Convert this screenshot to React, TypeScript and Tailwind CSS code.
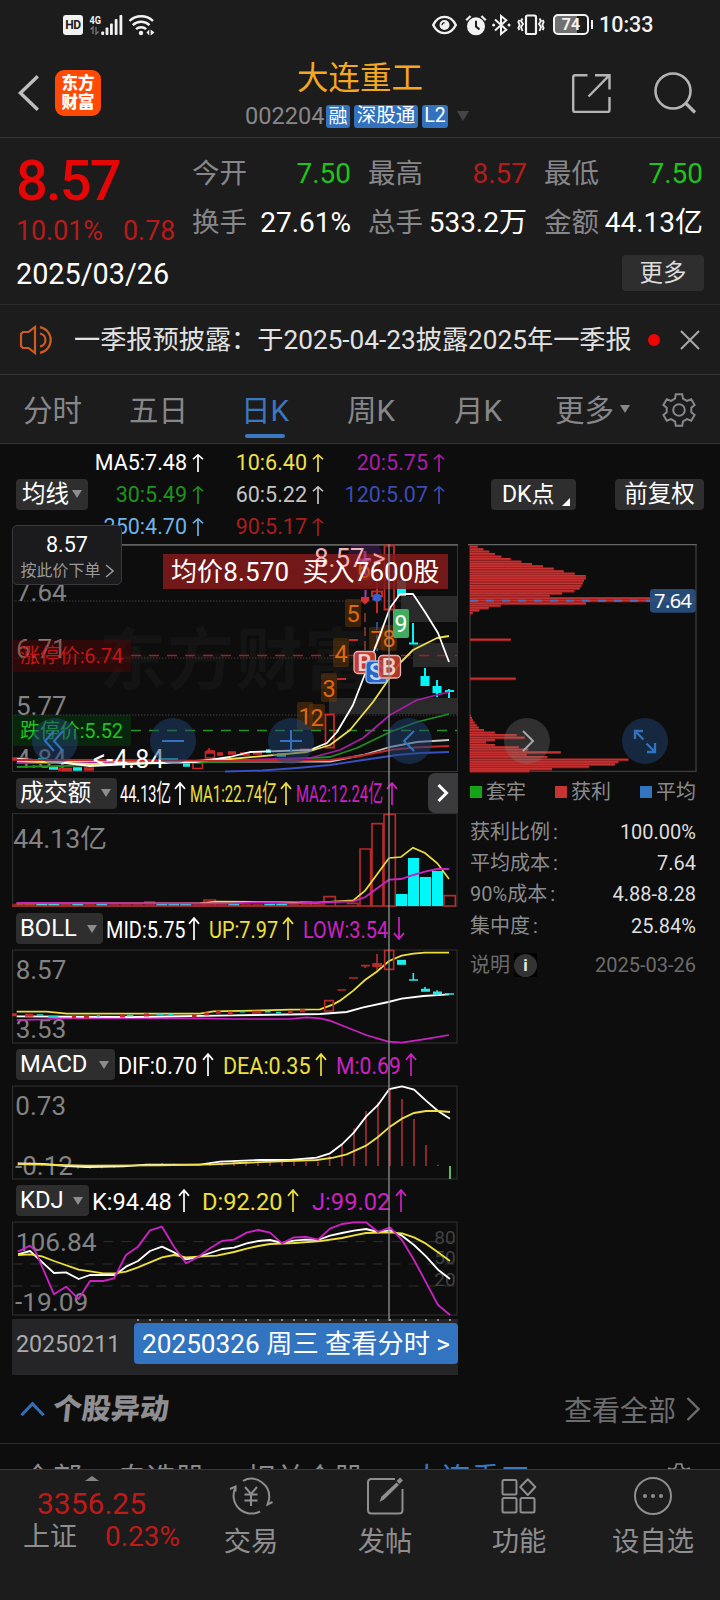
import React from "react";

const FONT = "font-['Roboto','Noto_Sans_CJK_SC',sans-serif]";

function Arrow({ down = false, className = "" }: { down?: boolean; className?: string }) {
  return (
    <svg viewBox="0 0 12 22" preserveAspectRatio="none" className={`shrink-0 ${className}`} fill="none" stroke="currentColor" strokeWidth="1.7">
      {down ? <path d="M6 0V21M1 15.5L6 21L11 15.5" /> : <path d="M6 22V1M1 6.5L6 1L11 6.5" />}
    </svg>
  );
}

function Tri({ className = "" }: { className?: string }) {
  return (
    <svg viewBox="0 0 10 8" className={`shrink-0 ${className}`} fill="currentColor">
      <path d="M0 0H10L5 8Z" />
    </svg>
  );
}

function Gear({ className = "" }: { className?: string }) {
  return (
    <svg viewBox="0 0 34 34" className={`shrink-0 ${className}`} fill="none" stroke="currentColor" strokeWidth="2">
      <path d="M13.8 1.2H20.2L21 5.6L25 7.9L29.2 6.3L32.6 12L29.3 14.7V19.3L32.6 22L29.2 27.7L25 26.1L21 28.4L20.2 32.8H13.8L13 28.4L9 26.1L4.8 27.7L1.4 22L4.7 19.3V14.7L1.4 12L4.8 6.3L9 7.9L13 5.6Z" />
      <circle cx="17" cy="17" r="5.8" />
    </svg>
  );
}

function StatusBar() {
  return (
    <div className="flex h-[48px] items-center pl-[63px] pt-px text-[#f2f2f2]">
      <div className="flex h-[20px] w-[20px] items-center justify-center rounded-[3px] bg-[#f2f2f2] text-[12px] font-bold leading-none text-[#1c1c1c]">
        <span className="tracking-[-0.4px]">HD</span>
      </div>
      <svg viewBox="0 0 66 22" className="ml-[6px] h-[22px] w-[66px]" fill="currentColor">
        <text x="0.5" y="9.5" fontSize="11.5" fontWeight="700" textLength="11.5" lengthAdjust="spacingAndGlyphs">4G</text>
        <g stroke="#777" strokeWidth="1.3" fill="none">
          <path d="M4 20V13L1.5 15.5M7 13V20L9.5 17.5" />
        </g>
        <rect x="12.3" y="17.5" width="2.8" height="3.5" rx="0.8" />
        <rect x="16.6" y="13.5" width="2.8" height="7.5" rx="0.8" />
        <rect x="21" y="9.5" width="2.8" height="11.5" rx="0.8" />
        <rect x="25.7" y="5" width="2.8" height="16" rx="0.8" />
        <rect x="30.5" y="1" width="2.8" height="20" rx="0.8" />
        <g fill="none" stroke="currentColor" strokeWidth="2.4">
          <path d="M40.5 7A17 17 0 0 1 64 7" />
          <path d="M43.8 11.2A12 12 0 0 1 60.5 11.2" />
          <path d="M47 15.2A7.5 7.5 0 0 1 57.2 15.2" />
        </g>
        <circle cx="52" cy="19" r="2.2" />
        <path d="M57.5 18.5L60.3 15.5V21.5ZM61.7 15.5L65.5 18.5L61.7 21.5Z" />
      </svg>
      <div className="ml-[277px] flex items-center">
        <svg viewBox="0 0 25 20" className="h-[20px] w-[25px]" fill="none" stroke="currentColor" strokeWidth="2.4">
          <path d="M1.2 10C6.5 -0.8 18.5 -0.8 23.8 10C18.5 20.8 6.5 20.8 1.2 10Z" />
          <circle cx="12.5" cy="10" r="5" fill="currentColor" stroke="none" />
          <path d="M10 10.3A2.6 2.6 0 0 1 12.6 7.6" stroke="#1c1c1c" strokeWidth="1.2" />
        </svg>
        <svg viewBox="0 0 22 22" className="ml-[8px] h-[22px] w-[22px]">
          <circle cx="11" cy="12.3" r="9" fill="currentColor" />
          <path d="M1.2 6.2L5.6 2M20.8 6.2L16.4 2" stroke="currentColor" strokeWidth="2.2" />
          <path d="M11 6.8V12.5L14.5 15.6" stroke="#1c1c1c" strokeWidth="2" fill="none" />
        </svg>
        <svg viewBox="0 0 19 22" className="ml-[5px] h-[22px] w-[19px]" fill="none" stroke="currentColor" strokeWidth="2">
          <path d="M3 5.6L14.3 15.8L9 20V2L14.3 6.2L3 16.4" />
          <circle cx="1.6" cy="11" r="1.5" fill="currentColor" stroke="none" />
          <circle cx="17" cy="11" r="1.5" fill="currentColor" stroke="none" />
        </svg>
        <svg viewBox="0 0 28 22" className="ml-[6px] h-[22px] w-[28px]" fill="none" stroke="currentColor" strokeWidth="2.2">
          <rect x="9" y="1.5" width="10" height="18.5" rx="1.5" />
          <path d="M5.5 4.5L4 7L6 10L4 13L5.5 17M2.4 6L1.4 8L2.6 11L1.4 14L2.4 16" strokeWidth="1.9" />
          <path d="M22.5 4.5L24 7L22 10L24 13L22.5 17M25.6 6L26.6 8L25.4 11L26.6 14L25.6 16" strokeWidth="1.9" />
        </svg>
        <div className="ml-[8px] flex h-[21px] w-[36px] items-center justify-center rounded-[5px] border-2 border-[#f2f2f2] bg-gradient-to-r from-[#707070] from-70% to-[#1c1c1c] to-70% text-[16px] font-bold leading-none">
          74
        </div>
        <div className="ml-[2px] h-[9px] w-[2px] bg-[#f2f2f2]" />
        <div className="ml-[6px] text-[21.5px] font-medium leading-none">10:33</div>
      </div>
    </div>
  );
}

function Header() {
  return (
    <div className="flex h-[90px] border-b border-[#333335]">
      <svg viewBox="0 0 22 36" className="ml-[17px] mt-[27px] h-[36px] w-[22px]" fill="none" stroke="#bdbdbd" strokeWidth="3.4">
        <path d="M20.8 1.2L3.4 18L20.8 34.8" />
      </svg>
      <div className="ml-[16px] mt-[22px] flex h-[46px] w-[46px] flex-col items-center justify-center rounded-[9px] bg-[#ff4a06] text-[16.5px] font-black leading-[19px] text-white">
        <span>东方</span>
        <span>财富</span>
      </div>
      <div className="ml-[125px] flex w-[270px] flex-col items-center">
        <div className="ml-[-2px] mt-[13px] h-[36px] whitespace-nowrap text-[31.5px] leading-[36px] text-[#f5a623]">大连重工</div>
        <div className="ml-[-8px] mt-[7px] flex items-center text-[#87878b]">
          <span className="w-[82px] pl-px text-[23.6px] leading-[24px]">002204</span>
          <span className="flex h-[23px] w-[24px] items-center justify-center rounded-[3px] bg-[#3272be] text-[19px] leading-none text-white">融</span>
          <span className="ml-[4px] flex h-[23px] w-[64px] items-center justify-center rounded-[3px] bg-[#3272be] text-[19.5px] leading-none text-white">深股通</span>
          <span className="ml-[4px] flex h-[23px] w-[26px] items-center justify-center rounded-[3px] bg-[#3272be] text-[19.5px] leading-none text-white">L2</span>
          <Tri className="ml-[8px] h-[10px] w-[14px] text-[#454547]" />
        </div>
      </div>
      <svg viewBox="0 0 40 40" className="ml-[75px] mt-[25px] h-[40px] w-[40px]" fill="none" stroke="#b4b4b4" strokeWidth="2.4">
        <path d="M16.5 2.2H4.2Q2.2 2.2 2.2 4.2V37Q2.2 39 4.2 39H36.5Q38.5 39 38.5 37V24" />
        <path d="M24 2.2H38.5V16.5M38 2.7L17.5 23.5" />
      </svg>
      <svg viewBox="0 0 44 44" className="ml-[42px] mt-[23px] h-[44px] w-[44px]" fill="none" stroke="#b4b4b4" strokeWidth="2.6">
        <circle cx="20" cy="20" r="17.5" />
        <path d="M32.5 32L42 41.5" strokeWidth="3.2" />
      </svg>
    </div>
  );
}

function Cell({ label, value, color, gap }: { label: string; value: string; color: string; gap: string }) {
  return (
    <div className={`flex h-[49px] items-center justify-between ${gap}`}>
      <span className="text-[27.5px] text-[#87878b]">{label}</span>
      <span className={color}>{value}</span>
    </div>
  );
}

function Quote() {
  return (
    <div className="h-[167px] border-b border-[#2b2b2d]">
      <div className="flex h-[110px]">
        <div className="w-[192px] pl-[16px]">
          <div className="mt-[15px] h-[56px] text-[56px] font-medium leading-[56px] tracking-[-1.8px] text-[#e60606]">8.57</div>
          <div className="mt-[9px] flex h-[27px] text-[26.8px] leading-[27px] text-[#b91b1b]">
            <span className="w-[107px]">10.01%</span>
            <span>0.78</span>
          </div>
        </div>
        <div className="mt-[11px] grid w-[511px] grid-cols-[159px_176px_176px] text-[28px] leading-[32px] text-white">
          <Cell label="今开" value="7.50" color="text-[#1fc31f]" gap="" />
          <Cell label="最高" value="8.57" color="text-[#b91b1b]" gap="pl-[17px]" />
          <Cell label="最低" value="7.50" color="text-[#1fc31f]" gap="pl-[17px]" />
          <Cell label="换手" value="27.61%" color="" gap="" />
          <Cell label="总手" value="533.2万" color="" gap="pl-[17px]" />
          <Cell label="金额" value="44.13亿" color="" gap="pl-[17px]" />
        </div>
      </div>
      <div className="flex items-center justify-between pl-[16px] pr-[16px] pt-[5px]">
        <span className="pt-[3px] text-[28.8px] leading-[36px] text-white">2025/03/26</span>
        <span className="flex h-[36px] w-[82px] items-center justify-center rounded-[4px] bg-[#2e2e2f] text-[23.5px] leading-none text-[#dcdcdc]">
          <span className="pt-[2px]">更多</span>
        </span>
      </div>
    </div>
  );
}

function Notice() {
  return (
    <div className="flex h-[70px] items-center border-b border-[#333335] pl-[19px]">
      <svg viewBox="0 0 36 30" className="h-[30px] w-[36px]" fill="none" stroke="#cf5c22" strokeWidth="2.2">
        <path d="M16 2V28L9.5 23H4L2 21V9L4 7H9.5Z" />
        <path d="M21 2.2A13 13 0 0 1 21 27.8M21 8.5A6.6 6.6 0 0 1 21 21.5" />
      </svg>
      <span className="ml-[19px] w-[560px] whitespace-nowrap text-[26.2px] leading-[36px] text-[#e2e2e2]">一季报预披露：于2025-04-23披露2025年一季报</span>
      <span className="ml-[14px] h-[12px] w-[12px] rounded-full bg-[#f00505]" />
      <svg viewBox="0 0 20 20" className="ml-[20px] h-[20px] w-[20px]" stroke="#a8a8a8" strokeWidth="2">
        <path d="M1 1L19 19M19 1L1 19" />
      </svg>
    </div>
  );
}

function PeriodTabs() {
  return (
    <div className="flex h-[69px] border-b border-[#333335] pt-[18px] text-[29.5px] leading-[36px] text-[#87878b]">
      <span className="ml-[23px] w-[106px]">分时</span>
      <span className="w-[112px]">五日</span>
      <div className="w-[106px] text-[#3b78bf]">
        <div className="h-[36px]">日K</div>
        <div className="ml-[4px] mt-[5px] h-[4px] w-[40px] rounded-full bg-[#3b78bf]" />
      </div>
      <span className="w-[107px]">周K</span>
      <span className="w-[101px]">月K</span>
      <span className="w-[65px]">更多</span>
      <Tri className="mt-[12px] h-[8px] w-[10px]" />
      <Gear className="ml-[32px] h-[34px] w-[34px]" />
    </div>
  );
}

function Ma({ text, color }: { text: string; color: string }) {
  return (
    <div className={`flex h-[32px] items-center justify-end text-[21.5px] leading-none ${color}`}>
      {text}
      <Arrow className="ml-[5px] h-[18px] w-[12px]" />
    </div>
  );
}

function ChartHeader() {
  return (
    <div className="relative flex h-[100px] items-center pl-[16px] text-white">
      <div className="flex h-[31px] w-[72px] items-center rounded-[4px] bg-[#2e2e2f] pl-[6px] text-[23.5px] leading-none">
        <span className="pt-px">均线</span>
        <Tri className="ml-[3px] h-[8px] w-[10px] text-[#8d8d8d]" />
      </div>
      <div className="mt-px grid w-[357px] grid-cols-[116px_120px_121px]">
        <Ma text="MA5:7.48" color="text-white" />
        <Ma text="10:6.40" color="text-[#ede04a]" />
        <Ma text="20:5.75" color="text-[#a81ea8]" />
        <Ma text="30:5.49" color="text-[#1f911f]" />
        <Ma text="60:5.22" color="text-[#c4c4c4]" />
        <Ma text="120:5.07" color="text-[#3a4cb4]" />
        <Ma text="250:4.70" color="text-[#6fb2e6]" />
        <Ma text="90:5.17" color="text-[#a81e1e]" />
      </div>
      <div className="ml-[46px] flex h-[31px] w-[85px] items-center rounded-[4px] bg-[#2e2e2f] pl-[11px] text-[23px] leading-none">
        <span className="pt-px">DK点</span>
        <svg viewBox="0 0 8 8" className="ml-[7px] mt-[15px] h-[8px] w-[8px]" fill="#fff"><path d="M8 0V8H0Z" /></svg>
      </div>
      <div className="ml-[39px] flex h-[31px] w-[89px] items-center justify-center rounded-[4px] bg-[#2e2e2f] text-[23.5px] leading-none">
        <span className="pt-px">前复权</span>
      </div>
      <div className="absolute left-[12px] top-[81px] z-20 flex h-[60px] w-[110px] flex-col items-center rounded-[5px] border border-[#3a3a3c] bg-[#1b1b1d]">
        <div className="mt-[6px] text-[21.5px] leading-[26px]">8.57</div>
        <div className="mt-[2px] flex items-center text-[16px] leading-[22px] text-[#9a9a9a]">
          按此价下单
          <svg viewBox="0 0 9 14" className="ml-[4px] h-[14px] w-[9px]" fill="none" stroke="currentColor" strokeWidth="1.5"><path d="M1 1L8 7L1 13" /></svg>
        </div>
      </div>
    </div>
  );
}

const tags: [number, number, string, number][] = [
  [345, 599, "5", 28], [333, 638, "4", 29], [321, 673, "3", 29], [297, 702, "1", 28], [309, 704, "2", 26], [357, 557, "6", 28], [369, 627, "7", 23], [381, 625, "8", 26],
];

function KLine() {
  return (
    <svg viewBox="12 544 446 229" className="block h-[229px] w-[446px]" fill="none">
      <g fill="#141414" fontSize="67" fontWeight="700">
        <text x="99" y="684" textLength="272">东方财富</text>
      </g>
      <g stroke="#2c2c2c" strokeWidth="1.5" strokeDasharray="1.5 1.5">
        <path d="M12 601H457M12 658H457M12 715H457" />
      </g>
      <path d="M12.5 544V771.5H457.5V544" stroke="#343434" />
      <path d="M12 544.8H458" stroke="#616161" strokeWidth="2" />
      <g fill="#2a2a2b">
        <rect x="401" y="596" width="56" height="26" />
        <rect x="413" y="643" width="44" height="24" />
        <rect x="329" y="698" width="128" height="16" />
      </g>
      <path d="M131 655.5H457" stroke="#9e2020" strokeDasharray="10 8" strokeWidth="1.3" />
      <path d="M131 730.5H457" stroke="#249224" strokeDasharray="10 8" strokeWidth="1.3" />
      <g fill="#828282" fontSize="26">
        <text x="16" y="601">7.64</text>
        <text x="16" y="658">6.71</text>
        <text x="16" y="715">5.77</text>
        <text x="16" y="768">4.84</text>
      </g>
      <rect x="12" y="640" width="119" height="32" rx="2" fill="#7a0000" fillOpacity="0.3" />
      <rect x="12" y="715" width="119" height="31" rx="2" fill="#005a0c" fillOpacity="0.33" />
      <text x="20" y="663" fontSize="20" fill="#c41616" textLength="103">涨停价:6.74</text>
      <text x="20" y="737.5" fontSize="20" fill="#23c023" textLength="103">跌停价:5.52</text>

      <g stroke="#c62828" strokeWidth="3.5">
        <path d="M12 759H27M60 767.5V771M62 769.5H72M84 769H94M217 754H223M228 753H236M240 754H250M253 753H262M300 750H310M206 752H215" />
      </g>
      <g stroke="#1de9e9" strokeWidth="3.5">
        <path d="M38 760H46M49 768H58M73 769H82M160 760H178M183 765H190M266 751H271M277 755H286" />
      </g>
      <path d="M193 763H202.5V768.5H193ZM205.5 752H214.5V758H205.5ZM209 748V752" stroke="#c62828" strokeWidth="1.6" />
      <path d="M325.5 714.5H334V747.5H325.5ZM384.5 545.5H394V609.5H384.5Z" stroke="#c62828" strokeWidth="1.8" />
      <g stroke="#c62828" strokeWidth="2">
        <path d="M349 640H358M337 679H346M377 575V613M372 591.5H382V596H372Z" />
        <path d="M365 613V651" stroke="#8f3a30" strokeDasharray="9 5" strokeWidth="1.6" />
        <path d="M377 622V651" stroke="#2d5fae" strokeDasharray="8 5" strokeWidth="1.6" />
        <path d="M365.5 590V600" stroke="#a040b0" />
      </g>
      <path d="M361 597L369 597V601L365 604.5L361 601Z" fill="#d83030" />
      <path d="M377 593L381.5 595.5V600L377 602L372.5 600V595.5Z" fill="#3a62c8" />
      <g fill="#00f5f5" stroke="#00f5f5">
        <rect x="397.5" y="580.5" width="8" height="15" />
        <path d="M413 623V643M409 643.5H418M425 668V677M437 680V697M449 689V698M445 691H454" strokeWidth="2" />
        <rect x="421" y="676.5" width="8" height="9" />
        <rect x="433" y="686.5" width="8" height="6" />
      </g>
      {tags.map(([x, y, t, h]) => (
        <g key={t}>
          <rect x={x} y={y} width="16" height={h} rx="2" fill="#713b08" fillOpacity="0.45" />
          <text x={x + 8} y={y + h / 2 + 9} fontSize="23.5" textAnchor="middle" fill="#e0690f">{t}</text>
        </g>
      ))}
      <g strokeWidth="1.8" strokeLinejoin="round">
        <polyline stroke="#3b50c4" points="225,771.5 262,770.5 297,768 330,765 363,760 397,755 420,753 449,752" />
        <polyline stroke="#c8c8c8" points="17,760 120,762 230,761.5 330,761.5 363,755 390,747 417,742 449,740" />
        <polyline stroke="#1f8f1f" points="17,767 60,766 120,764 250,761 330,757 357,748 390,732 417,722 449,714" />
        <polyline stroke="#a51fa5" points="17,763 90,763 160,762 240,760 310,758 340,750 363,738 390,715 417,700 449,692" />
        <polyline stroke="#ede04a" points="17,761 90,764 160,763 230,759 307,752 330,745 350,730 373,702 400,663 413,650 437,638 449,636" />
        <polyline stroke="#ffffff" points="17,759 50,761 90,766 150,763 195,762 230,757 250,752 310,750 327,743 337,732 353,705 365,674 377,643 390,608 400,594 413,594 425,612 438,633 449,662" />
        <polyline stroke="#c62828" points="17,760 120,760 230,761 290,761 330,760 360,756 390,750 415,747.5 449,746" />
      </g>
      <rect x="393" y="609" width="16" height="29" rx="2" fill="#3fac60" />
      <text x="401" y="632" fontSize="23" textAnchor="middle" fill="#fff">9</text>
      <circle cx="365" cy="556" r="17" fill="#6a2a90" fillOpacity="0.3" />
      <rect x="163" y="554" width="285" height="35" fill="#821a1a" fillOpacity="0.88" />
      <g fontSize="25">
        <text x="314" y="567" fontSize="26" fill="#f3b3b3">8.57</text>
        <text x="364" y="567" fontSize="26" fill="#d86aa0">-</text>
        <text x="372" y="567" fontSize="26" fill="#f0a0a8">&gt;</text>
        <text x="357" y="578" fill="#e0690f" fillOpacity="0.7">6</text>
        <text x="93" y="767.5" fill="#fff" textLength="71">&lt;-4.84</text>
      </g>
      <path d="M358 560H371M365 551V575" stroke="#c050b8" strokeWidth="3" strokeOpacity="0.6" />
      <g fontSize="26" fill="#fff">
        <text x="171" y="581" textLength="118">均价8.570</text>
        <text x="302.5" y="581" textLength="137">买入7600股</text>
      </g>
      <g fontSize="23" fontWeight="500" textAnchor="middle" strokeWidth="1.3">
        <rect x="354" y="651.5" width="21.5" height="22" rx="4" fill="#c23c30" stroke="#e9b3ad" />
        <text x="364.5" y="671" fill="#fff" fillOpacity="0.75">B</text>
        <rect x="366" y="661" width="21" height="22" rx="4" fill="#2766c6" stroke="#9fc0ee" />
        <text x="376" y="680" fill="#fff" fillOpacity="0.75">S</text>
        <rect x="378.5" y="655.5" width="22" height="22.5" rx="4" fill="#c23c30" fillOpacity="0.88" stroke="#e9b3ad" />
        <text x="389" y="675" fill="#fff" fillOpacity="0.75">B</text>
      </g>
    </svg>
  );
}

function RoundButton({ children, className }: { children: React.ReactNode; className: string }) {
  return (
    <div className={`absolute top-[174px] flex h-[46px] w-[46px] items-center justify-center rounded-full ${className}`}>
      <svg viewBox="0 0 30 30" className="h-[30px] w-[30px]" fill="none" stroke="currentColor" strokeWidth="2">{children}</svg>
    </div>
  );
}

type Reading = { text: string; box: string; scale: string; color: string; down?: boolean; arrow: string };

function IndicatorHeader({ name, button, row, readings, children }: { name: string; button: string; row: string; readings: Reading[]; children?: React.ReactNode }) {
  return (
    <div className={`flex items-center pl-[4px] ${row}`}>
      <div className={`flex h-[31px] shrink-0 items-center justify-between rounded-[4px] bg-[#2e2e2f] pl-[4px] pr-[6px] text-[23.8px] leading-none text-white ${button}`}>
        <span className="pt-px">{name}</span>
        <Tri className="h-[8px] w-[10px] text-[#8d8d8d]" />
      </div>
      {readings.map((r) => (
        <div key={r.text} className={`flex items-center ${r.color}`}>
          <div className={`h-[24px] whitespace-nowrap text-[24.6px] leading-[26px] ${r.box}`}>
            <span className={`inline-block origin-left ${r.scale}`}>{r.text}</span>
          </div>
          <Arrow down={r.down} className={`h-[23px] w-[12px] ${r.arrow}`} />
        </div>
      ))}
      {children}
    </div>
  );
}

const Y = "text-[#ede03a]";
const M = "text-[#cc22c4]";

const volumeReadings: Reading[] = [
  { text: "44.13亿", box: "ml-[3px] w-[51px]", scale: "scale-x-[0.59]", color: "text-white", arrow: "ml-[3px]" },
  { text: "MA1:22.74亿", box: "ml-[4px] w-[87px]", scale: "scale-x-[0.605]", color: Y, arrow: "ml-[3px]" },
  { text: "MA2:12.24亿", box: "ml-[4px] w-[87px]", scale: "scale-x-[0.605]", color: M, arrow: "ml-[3px]" },
];
const bollReadings: Reading[] = [
  { text: "MID:5.75", box: "ml-[3px] w-[79px]", scale: "scale-x-[0.81]", color: "text-white", arrow: "ml-[3px]" },
  { text: "UP:7.97", box: "ml-[9px] w-[69px]", scale: "scale-x-[0.81]", color: Y, arrow: "ml-[4px]" },
  { text: "LOW:3.54", box: "ml-[9px] w-[86px]", scale: "scale-x-[0.81]", color: M, arrow: "ml-[4px]", down: true },
];
const macdReadings: Reading[] = [
  { text: "DIF:0.70", box: "ml-[3px] w-[80px]", scale: "scale-x-[0.875]", color: "text-white", arrow: "ml-[4px]" },
  { text: "DEA:0.35", box: "ml-[9px] w-[88px]", scale: "scale-x-[0.875]", color: Y, arrow: "ml-[4px]" },
  { text: "M:0.69", box: "ml-[9px] w-[65px]", scale: "scale-x-[0.86]", color: M, arrow: "ml-[4px]" },
];
const kdjReadings: Reading[] = [
  { text: "K:94.48", box: "ml-[3px] w-[81px]", scale: "scale-x-[0.96]", color: "text-white", arrow: "ml-[5px]" },
  { text: "D:92.20", box: "ml-[12px] w-[80px]", scale: "scale-x-[0.96]", color: Y, arrow: "ml-[5px]" },
  { text: "J:99.02", box: "ml-[13px] w-[78px]", scale: "scale-x-[0.965]", color: M, arrow: "ml-[5px]" },
];

const LABEL = "#828282";
const dayColors = "rrccrcrcrrrrcccrrrcrrccrrr".split("");

function Volume() {
  return (
    <svg viewBox="36 129 1338 282" className="block h-[94px] w-[446px]" fill="none">
      <rect x="38" y="131" width="1333" height="278" stroke="#333" strokeWidth="3" />
      <text x="40" y="233" fontSize="80" fill={LABEL}>44.13亿</text>
      {dayColors.map((c, i) => (
        <rect key={i} x={37 + i * 36} y="401" width="33" height="7" fill={c === "c" ? "#2fd6ea" : "#8f2222"} />
      ))}
      <g stroke="#b52a2a" strokeWidth="5">
        <path d="M432 396H466M612 390H646V408H612ZM972 380H1006V408H972ZM1080 237H1112V408H1080ZM1116 161H1149V408H1116ZM1152 133H1186V408H1152ZM1332 377H1366V408H1332ZM36 408H1190M900 396H934V408M1040 400H1074V408" />
      </g>
      <g fill="#00f7f7">
        <rect x="1188" y="372" width="34" height="36" />
        <rect x="1224" y="264" width="33" height="144" />
        <rect x="1260" y="321" width="33" height="87" />
        <rect x="1296" y="303" width="33" height="105" />
      </g>
      <polyline stroke="#ede03a" strokeWidth="5" points="50,400 600,399 650,395 800,396 950,398 1060,391 1096,361 1167,264 1203,261 1239,233 1275,249 1312,280 1347,327" />
      <polyline stroke="#cc22c4" strokeWidth="5.5" points="50,399 550,400 700,400 770,397 880,400 1000,396 1060,394 1096,381 1167,329 1203,327 1240,315 1275,305 1312,297 1347,297" />
    </svg>
  );
}

function Boll() {
  return (
    <svg viewBox="36 537 1338 285" className="block h-[95px] w-[446px]" fill="none">
      <rect x="38" y="540" width="1333" height="279" stroke="#333" strokeWidth="3" />
      <g fontSize="78" fill={LABEL}>
        <text x="47" y="627">8.57</text>
        <text x="47" y="805">3.53</text>
      </g>
      <polyline stroke="#cc22c4" strokeWidth="5" points="50,750 140,748 190,744 600,745 700,747 870,747 920,742 960,745 990,752 1030,768 1100,796 1165,815 1205,818 1270,808 1347,795" />
      <polyline stroke="#fff" strokeWidth="5.5" points="50,739 400,741 700,736 960,732 1040,726 1090,712 1165,696 1205,686 1270,678 1347,673" />
      <polyline stroke="#ede03a" strokeWidth="5.5" points="50,725 140,725 200,731 600,731 640,724 760,722 870,719 960,718 1000,703 1020,692 1060,662 1095,630 1130,605 1167,573 1205,557 1240,551 1275,548 1347,548" />
      <path d="M36 734H50M75 736H100M216 741H228M252 741H267M360 738H375M432 735H447M576 738H590M613 732H627M648 727H662M684 729H698M756 727H784M864 727H878M900 722H915" stroke="#c62828" strokeWidth="9" />
      <path d="M110 735H130M145 740H175M290 738H300M380 737H400M470 733H490M505 734H520M720 725H735M795 725H812M828 728H843" stroke="#1fd8d0" strokeWidth="5" />
      <path d="M974 692H1000V723H974ZM1154 541H1181V598H1154ZM1012 660H1038M1047 624H1074M1083 587H1110M1095 587V594M1131 552V599M1117 585H1146" stroke="#b52a2a" strokeWidth="5" />
      <path d="M1117 585H1146" stroke="#b52a2a" strokeWidth="12" />
      <path d="M1240 609V629M1227 630H1254M1275 651V660M1311 661V676M1335 672H1362" stroke="#2fe6e6" strokeWidth="5" />
      <path d="M1191 577H1218" stroke="#18eeee" strokeWidth="15" />
      <path d="M1263 661H1290M1299 669H1326" stroke="#2fe6e6" strokeWidth="9" />
    </svg>
  );
}

const macdBars: [number, number][] = [
  [54, 352], [90, 352], [126, 356], [414, 359], [450, 356], [486, 354], [522, 356], [558, 359], [594, 359], [630, 353], [666, 347], [702, 346], [738, 345], [774, 345], [810, 348], [846, 350], [882, 350], [918, 351], [954, 350],
  [989, 333], [1026, 300], [1062, 250], [1098, 198], [1134, 172], [1170, 135], [1206, 162], [1242, 222], [1278, 300], [1314, 359],
];

function Macd() {
  return (
    <svg viewBox="36 120 1338 285" className="block h-[95px] w-[446px]" fill="none">
      <rect x="38" y="123" width="1333" height="279" stroke="#333" strokeWidth="3" />
      <g fontSize="78" fill={LABEL}>
        <text x="46" y="209">0.73</text>
        <text x="45" y="390">-0.12</text>
      </g>
      {macdBars.map(([x, y]) => (
        <path key={x} d={`M${x} ${y}V363`} stroke="#a23030" strokeWidth="5" />
      ))}
      <path d="M198 363V368M234 363V371M270 363V371M306 363V370M342 363V368" stroke="#2a8a2a" strokeWidth="4" />
      <path d="M1350 363V402" stroke="#5cb85c" strokeWidth="6" />
      <polyline stroke="#fff" strokeWidth="5.5" points="54,355 130,357 200,363 260,366 370,364 440,359 600,359 660,350 780,345 870,345 950,338 990,325 1026,298 1062,262 1098,215 1134,180 1168,132 1206,124 1242,134 1278,167 1314,198 1350,221" />
      <polyline stroke="#ede04a" strokeWidth="5.5" points="54,357 260,362 480,361 640,358 720,354 840,349 950,345 1000,338 1040,328 1098,302 1134,276 1170,245 1206,221 1242,204 1278,198 1314,198 1350,201" />
    </svg>
  );
}

function Kdj() {
  return (
    <svg viewBox="36 528 1338 285" className="block h-[95px] w-[446px]" fill="none">
      <rect x="38" y="531" width="1333" height="279" stroke="#333" strokeWidth="3" />
      <path d="M310 590H1371M38 657H1371M38 723H1371" stroke="#303030" strokeWidth="3" strokeDasharray="30 24" />
      <g fontSize="57" fill="#414141">
        <text x="1303" y="598">80</text>
        <text x="1303" y="656">50</text>
        <text x="1303" y="722">20</text>
      </g>
      <g fontSize="79" fill={LABEL}>
        <text x="47" y="617">106.84</text>
        <text x="45" y="798">-19.09</text>
      </g>
      <g strokeWidth="5.5" strokeLinejoin="round">
        <polyline stroke="#fff" points="54,628 90,618 162,684 198,682 236,702 270,690 345,690 378,665 414,648 450,618 486,605 522,622 558,643 594,636 630,624 666,612 702,608 740,595 775,588 810,585 846,594 882,587 918,584 954,585 990,572 1026,564 1062,557 1098,552 1134,561 1170,556 1206,572 1242,600 1278,634 1314,674 1350,702" />
        <polyline stroke="#ede03a" points="54,630 90,628 126,634 162,648 236,674 310,685 345,685 378,680 414,667 450,652 486,637 522,630 558,637 594,635 650,632 702,621 740,611 775,603 810,597 882,594 954,589 1026,579 1062,571 1098,564 1170,562 1206,565 1242,577 1278,596 1314,622 1350,648" />
        <polyline stroke="#cc22c4" points="54,620 90,602 106,618 162,748 198,725 236,762 270,708 310,708 342,700 378,630 414,605 450,556 486,545 522,605 558,655 594,636 630,610 666,588 702,584 740,563 775,555 810,563 846,595 882,577 918,576 954,584 990,551 1026,537 1062,532 1098,532 1134,561 1170,547 1206,585 1242,645 1278,712 1314,780 1350,810" />
      </g>
    </svg>
  );
}

const chips: [number, number][] = [
  [50, 53], [58, 70], [65, 88], [72, 105], [80, 124], [87, 152], [95, 184], [102, 216], [109, 249], [116, 281], [124, 311], [131, 344], [138, 377], [145, 377], [152, 372], [160, 368], [168, 364], [175, 359], [183, 343], [190, 306], [197, 269], [205, 706], [212, 706], [220, 378], [227, 122], [234, 86], [241, 58], [249, 38],
  [329, 152], [446, 167],
  [557, 32], [564, 36], [571, 39], [578, 44], [586, 50], [593, 56], [600, 72], [608, 105], [615, 170], [623, 194], [630, 105], [637, 78], [645, 105], [652, 176], [659, 205], [667, 302], [674, 200], [681, 262], [689, 505], [696, 475], [703, 465], [710, 387], [717, 276], [723, 208],
];

function ChipChart() {
  return (
    <svg viewBox="24 42 690 687" className="block h-[229px] w-[230px]" fill="none">
      <path d="M30 42V724H708V42" stroke="#3d3d3d" strokeWidth="4" />
      <path d="M0 43H710" stroke="#666" strokeWidth="6" />
      {chips.map(([y, x]) => (
        <g key={y}>
          <rect x="30" y={y - 3} width={x - 30} height="8" fill="#8c1c1c" />
          <rect x="30" y={y - 3} width={x - 30} height="5" fill="#c63232" />
        </g>
      ))}
      <path d="M30 212H570" stroke="#4a70b8" strokeWidth="6" strokeDasharray="24 24" />
      <rect x="570" y="177" width="137" height="71" rx="10" fill="#28507f" fillOpacity="0.93" />
      <text x="582" y="234" fontSize="60" fill="#fff" className="font-['Noto_Sans',sans-serif]" textLength="114">7.64</text>
    </svg>
  );
}

function InfoRow({ label, value }: { label: string; value: string }) {
  return (
    <div className="flex h-[31.3px] items-center justify-between">
      <span className="text-[#8b8b8d]">{label}<span className="pl-[3px]">:</span></span>
      <span className="text-[#dedede]">{value}</span>
    </div>
  );
}

function ChipPanel() {
  return (
    <div className="w-[242px]">
      <div className="pl-[10px]"><ChipChart /></div>
      <div className="w-[238px] pl-[12px] text-[20px] leading-[24px]">
        <div className="mt-[7px] flex h-[24px] items-center text-[#8b8b8d]">
          <span className="h-[12px] w-[12px] bg-[#17a317]" />
          <span className="ml-[4px] w-[69px]">套牢</span>
          <span className="h-[12px] w-[12px] bg-[#c73434]" />
          <span className="ml-[4px] w-[69px]">获利</span>
          <span className="h-[12px] w-[12px] bg-[#3274c0]" />
          <span className="ml-[4px] whitespace-nowrap">平均</span>
        </div>
        <div className="mt-[12px]">
          <InfoRow label="获利比例" value="100.00%" />
          <InfoRow label="平均成本" value="7.64" />
          <InfoRow label="90%成本" value="4.88-8.28" />
          <InfoRow label="集中度" value="25.84%" />
        </div>
        <div className="mt-[12px] flex h-[24px] items-center text-[#6c6c6e]">
          <span className="w-[44px]">说明</span>
          <span className="flex h-[24px] w-[23px] items-center justify-center bg-black">
            <span className="flex h-[23px] w-[23px] items-center justify-center rounded-full bg-[#333] text-[17px] font-bold leading-none text-[#e8e8e8]">i</span>
          </span>
          <span className="ml-auto">2025-03-26</span>
        </div>
      </div>
    </div>
  );
}

function Charts() {
  return (
    <div className="flex pl-[12px]">
      <div className="relative w-[446px]">
        <KLine />
        <RoundButton className="left-[20px] bg-[#1f4473]/50 text-[#3272be]"><path d="M14 5L5 15L14 25M23 5L14 15L23 25" /></RoundButton>
        <RoundButton className="left-[138px] bg-[#1f4473]/50 text-[#3272be]"><path d="M4 15H26" /></RoundButton>
        <RoundButton className="left-[256px] bg-[#1f4473]/50 text-[#3272be]"><path d="M4 15H26M15 4V26" /></RoundButton>
        <RoundButton className="left-[374px] bg-[#1f4473]/50 text-[#3272be]"><path d="M20 5L10 15L20 25" /></RoundButton>
        <RoundButton className="left-[492px] bg-[#808080]/30 text-[#a8a8a8]"><path d="M11 5L21 15L11 25" /></RoundButton>
        <RoundButton className="left-[610px] bg-[#1f4473]/50 text-[#3272be]">
          <path d="M5 13V5H13M5 5L13.5 13.5M17 26H25V17M25 26L16.5 17.5" strokeWidth="2.3" />
        </RoundButton>
        <IndicatorHeader name="成交额" button="w-[101px]" row="h-[40px]" readings={volumeReadings}>
          <div className="ml-auto flex h-[40px] w-[30px] items-center justify-center rounded-l-[7px] bg-[#3b3b3d]">
            <svg viewBox="0 0 12 20" className="h-[20px] w-[12px]" fill="none" stroke="#fff" strokeWidth="3"><path d="M1.5 2L9.5 10L1.5 18" /></svg>
          </div>
        </IndicatorHeader>
        <Volume />
        <IndicatorHeader name="BOLL" button="w-[87px]" row="h-[42px] pt-px" readings={bollReadings} />
        <Boll />
        <IndicatorHeader name="MACD" button="w-[99px]" row="h-[41px]" readings={macdReadings} />
        <Macd />
        <IndicatorHeader name="KDJ" button="w-[73px]" row="h-[41px]" readings={kdjReadings} />
        <Kdj />
        <div className="mt-[3px] flex h-[56px] bg-[#252527]">
          <span className="w-[122px] pl-[4px] pt-[10px] text-[23.2px] leading-[30px] text-[#ababab]">20250211</span>
          <div>
            <svg viewBox="0 0 324 4" className="block h-[4px] w-[324px]" stroke="#8a8a8a" strokeWidth="2">
              <path d="M3 1H324" strokeDasharray="2 10" />
            </svg>
            <div className="flex h-[41px] w-[324px] items-center whitespace-nowrap rounded-[4px] bg-[#3274c0] pl-[8px] text-[26.2px] leading-none text-white">
              <span className="pt-px">20250326 周三 查看分时 &gt;</span>
            </div>
          </div>
        </div>
        <div className="absolute left-[376px] top-0 h-[777px] w-[2px] bg-[#9a9a9a]/60" />
      </div>
      <ChipPanel />
    </div>
  );
}

function Movements() {
  return (
    <div>
      <div className="flex h-[69px] items-center border-b border-[#2a2a2c] pl-[20px]">
        <svg viewBox="0 0 26 16" className="h-[16px] w-[25px]" fill="none" stroke="#3470b4" strokeWidth="3.2"><path d="M1.5 14.5L13 2.5L24.5 14.5" /></svg>
        <span className="ml-[8px] w-[123px] -skew-x-6 whitespace-nowrap text-[29px] font-black leading-[36px] text-[#8e8e93]">个股异动</span>
        <span className="ml-[388px] mt-[5px] whitespace-nowrap text-[28px] leading-[36px] text-[#6d6d6f]">查看全部</span>
        <svg viewBox="0 0 14 24" className="ml-[10px] h-[24px] w-[14px]" fill="none" stroke="#6d6d6f" strokeWidth="2.4"><path d="M1.5 1L12.5 12L1.5 23" /></svg>
      </div>
      <div className="flex h-[25px] overflow-hidden whitespace-nowrap pl-[23px] pt-[17px] text-[29.5px] leading-[36px] text-[#8a8a8e]">
        <span className="w-[94px]">全部</span>
        <span className="w-[129px]">自选股</span>
        <span className="w-[166px]">相关个股</span>
        <span className="w-[253px] text-[#3b78bf]">大连重工</span>
        <Gear className="mt-[2px] h-[28px] w-[28px]" />
      </div>
    </div>
  );
}

function NavItem({ label, children }: { label: string; children: React.ReactNode }) {
  return (
    <div className="flex w-[134px] flex-col items-center">
      <svg viewBox="0 0 44 40" className="mt-[6px] h-[40px] w-[44px]" fill="none" stroke="#8e8e91" strokeWidth="2">{children}</svg>
      <span className="mt-[8px] text-[27.3px] leading-[36px] text-[#8e8e91]">{label}</span>
    </div>
  );
}

function BottomNav() {
  return (
    <div className="flex h-[131px] border-t border-[#39393b] bg-[#1c1c1c]">
      <div className="w-[184px] text-[#bd1a1a]">
        <svg viewBox="0 0 14 5" className="ml-[85px] mt-[6px] h-[5px] w-[14px]" fill="#858588"><path d="M7 0L14 5H0Z" /></svg>
        <div className="ml-[37px] mt-[7px] text-[30px] leading-[32px]">3356.25</div>
        <div className="ml-[23px] mt-px flex text-[28px] leading-[32px]">
          <span className="w-[82px] text-[27px] text-[#8e8e91]">上证</span>
          <span>0.23%</span>
        </div>
      </div>
      <NavItem label="交易">
        <path d="M14 4.8A18 18 0 0 1 40 23.5L38.5 28.5L43.5 26M31 35.5A18 18 0 0 1 6.5 11.5M1 13L6.5 10.5V15.5" />
        <path d="M16 11L22 18L28 11M22 18V30M15.5 18.5H28.5M15.5 24.5H28.5" />
      </NavItem>
      <NavItem label="发帖">
        <path d="M32 3H8.5Q5 3 5 6.5V34Q5 37.5 8.5 37.5H36Q39.5 37.5 39.5 34V13" />
        <path d="M16.5 26L18.5 20.5L33.5 6.5L36 9L21 23.5Z" fill="#8e8e91" stroke="none" />
        <path d="M35 6.5L38.5 3" strokeWidth="4" />
      </NavItem>
      <NavItem label="功能">
        <rect x="5.5" y="4" width="14" height="14.5" rx="1.5" />
        <rect x="5.5" y="22" width="14" height="14.5" rx="1.5" />
        <rect x="23.5" y="22" width="14" height="14.5" rx="1.5" />
        <path d="M30.8 3.2L38.3 11L30.8 19L23.2 11Z" strokeLinejoin="round" />
      </NavItem>
      <NavItem label="设自选">
        <circle cx="22" cy="20" r="18" />
        <g fill="#8e8e91" stroke="none"><circle cx="14" cy="20" r="2" /><circle cx="22" cy="20" r="2" /><circle cx="30" cy="20" r="2" /></g>
      </NavItem>
    </div>
  );
}

export default function App() {
  return (
    <div className={`h-[1600px] w-[720px] overflow-hidden bg-[#0d0d0d] ${FONT}`}>
      <div className="bg-[#1c1c1c]">
        <StatusBar />
        <Header />
        <Quote />
        <Notice />
        <PeriodTabs />
      </div>
      <ChartHeader />
      <Charts />
      <Movements />
      <BottomNav />
    </div>
  );
}
